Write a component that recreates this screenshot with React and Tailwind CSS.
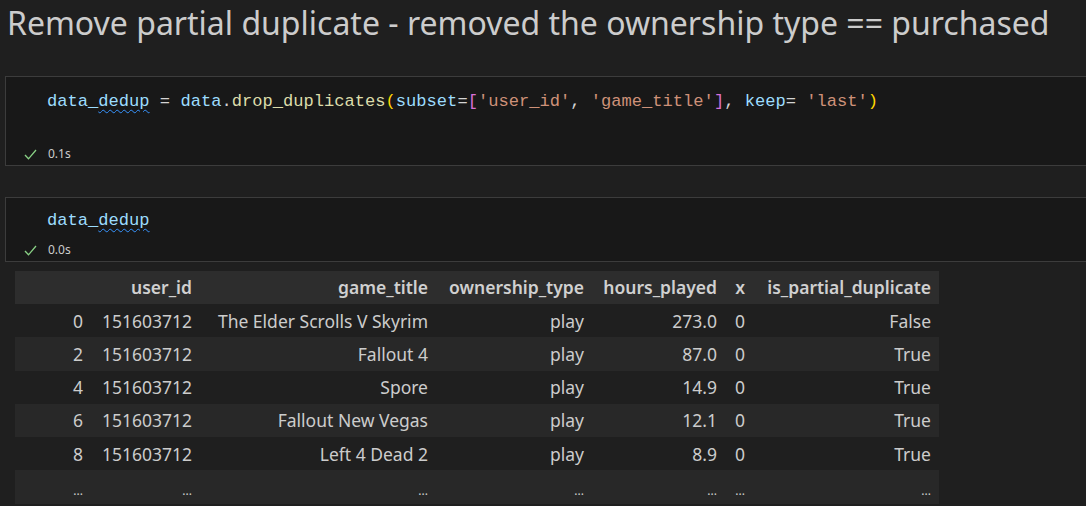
import React from "react";

const rows = [
  ["0", "151603712", "The Elder Scrolls V Skyrim", "play", "273.0", "0", "False"],
  ["2", "151603712", "Fallout 4", "play", "87.0", "0", "True"],
  ["4", "151603712", "Spore", "play", "14.9", "0", "True"],
  ["6", "151603712", "Fallout New Vegas", "play", "12.1", "0", "True"],
  ["8", "151603712", "Left 4 Dead 2", "play", "8.9", "0", "True"],
  ["...", "...", "...", "...", "...", "...", "..."],
];

const cols = ["", "user_id", "game_title", "ownership_type", "hours_played", "x", "is_partial_duplicate"];
const widths = ["w-[76px]", "w-[109px]", "w-[236px]", "w-[156px]", "w-[133px]", "w-[28px]", "w-[186px]"];

function Check() {
  return (
    <svg width="13" height="11" viewBox="0 0 13 11" className="shrink-0">
      <path d="M1 6 L4.5 9.8 L12 1" fill="none" stroke="#89d185" strokeWidth="1.3" />
    </svg>
  );
}

function Status({ time }) {
  return (
    <div className="flex items-center gap-[11px] pl-[18px] h-[18px] text-[12px] text-[#cccccc]" style={{ fontFamily: "'Noto Sans', sans-serif" }}>
      <Check />
      <span>{time}</span>
    </div>
  );
}

const mono = { fontFamily: "'Liberation Mono', monospace" };

export default function App() {
  return (
    <div className="w-[1086px] h-[506px] overflow-hidden bg-[#1f1f1f] text-[#cccccc]" style={{ fontFamily: "'Noto Sans', sans-serif" }}>
      <h1 className="pl-[7px] pt-[1px] h-[60px] text-[32px] leading-[44px] text-[#cccccc] whitespace-nowrap">
        Remove partial duplicate - removed the ownership type == purchased
      </h1>

      <div className="ml-[5px] mt-[16px] w-[1100px] h-[90px] border border-[#3c3c3c] bg-[#181818] flex flex-col">
        <div className="pl-[41px] pt-[13px] h-[68px] text-[17.1px] leading-[24px] whitespace-nowrap" style={mono}>
          <span className="text-[#9cdcfe]">data_<span className="underline decoration-wavy decoration-[#3794ff] decoration-1 underline-offset-[3px]">dedup</span></span>
          <span className="text-[#d4d4d4]"> = </span>
          <span className="text-[#9cdcfe]">data</span>
          <span className="text-[#d4d4d4]">.</span>
          <span className="text-[#dcdcaa]">drop_duplicates</span>
          <span className="text-[#ffd700]">(</span>
          <span className="text-[#9cdcfe]">subset</span>
          <span className="text-[#d4d4d4]">=</span>
          <span className="text-[#da70d6]">[</span>
          <span className="text-[#ce9178]">'user_id'</span>
          <span className="text-[#d4d4d4]">, </span>
          <span className="text-[#ce9178]">'game_title'</span>
          <span className="text-[#da70d6]">]</span>
          <span className="text-[#d4d4d4]">, </span>
          <span className="text-[#9cdcfe]">keep</span>
          <span className="text-[#d4d4d4]">= </span>
          <span className="text-[#ce9178]">'last'</span>
          <span className="text-[#ffd700]">)</span>
        </div>
        <Status time="0.1s" />
      </div>

      <div className="ml-[5px] mt-[31px] w-[1100px] h-[65px] border border-[#3c3c3c] bg-[#181818] flex flex-col">
        <div className="pl-[41px] pt-[11px] h-[43px] text-[17.1px] leading-[24px]" style={mono}>
          <span className="text-[#9cdcfe]">data_<span className="underline decoration-wavy decoration-[#3794ff] decoration-1 underline-offset-[3px]">dedup</span></span>
        </div>
        <Status time="0.0s" />
      </div>

      <table className="ml-[15px] mt-[9px] w-[924px] table-fixed border-collapse text-[17.5px]">
        <thead>
          <tr className="bg-[#2d2d2d] h-[33px]">
            {cols.map((c, i) => (
              <th key={i} className={`${widths[i]} pr-[8px] text-right font-semibold text-[#d0d0d0] whitespace-nowrap`}>{c}</th>
            ))}
          </tr>
        </thead>
        <tbody>
          {rows.map((r, ri) => (
            <tr key={ri} className={`h-[33.3px] ${ri % 2 === 1 ? "bg-[#282828]" : "bg-[#1f1f1f]"}`}>
              {r.map((v, ci) => (
                <td key={ci} className={`pr-[8px] text-right whitespace-nowrap ${v === "..." ? "text-[12px] align-bottom pb-[4px]" : ""}`}>{v}</td>
              ))}
            </tr>
          ))}
        </tbody>
      </table>
    </div>
  );
}
